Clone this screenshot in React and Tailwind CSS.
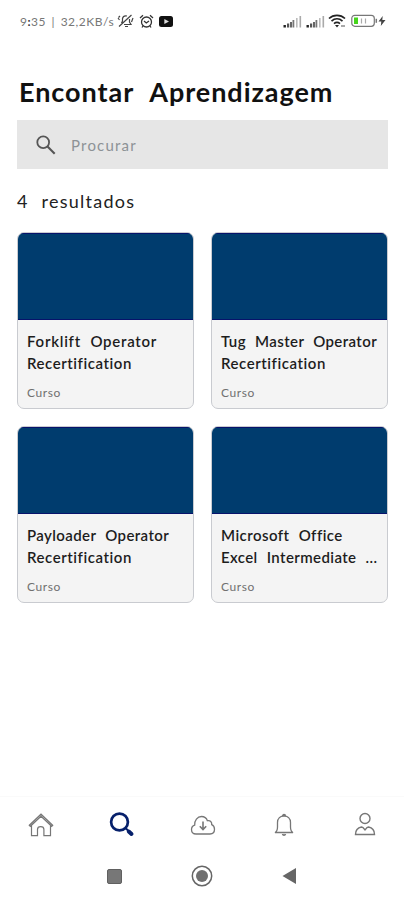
import * as React from "react"
import { cva } from "class-variance-authority"
import clsx from "clsx"

const courses = [
  {
    id: 1,
    type: "Curso",
    lines: [
      { text: "Forklift Operator", spacing: "tracking-[0.75px]" },
      { text: "Recertification", spacing: "tracking-[0.55px]" },
    ],
  },
  {
    id: 2,
    type: "Curso",
    lines: [
      { text: "Tug Master Operator", spacing: "tracking-[0.4px]" },
      { text: "Recertification", spacing: "tracking-[0.55px]" },
    ],
  },
  {
    id: 3,
    type: "Curso",
    lines: [
      { text: "Payloader Operator", spacing: "tracking-[0.4px]" },
      { text: "Recertification", spacing: "tracking-[0.55px]" },
    ],
  },
  {
    id: 4,
    type: "Curso",
    lines: [
      { text: "Microsoft Office", spacing: "tracking-[0.45px]" },
      { text: "Excel Intermediate ...", spacing: "tracking-[0.4px]" },
    ],
  },
]

const iconVariants = cva("shrink-0 fill-none", {
  variants: {
    tone: {
      default: "stroke-[#777]",
      active: "stroke-[#06206b]",
    },
  },
  defaultVariants: { tone: "default" },
})

// Status bar
const SignalIcon = () => (
  <svg width="19" height="13" viewBox="0 0 19 13" className="shrink-0">
    <rect x="0.5" y="10" width="2.4" height="2.5" fill="#222" />
    <rect x="4" y="8.5" width="2.2" height="4" fill="#555" />
    <rect x="7" y="7" width="2" height="5.5" fill="#666" />
    <rect x="9.5" y="5" width="1.8" height="7.5" fill="#777" />
    <rect x="13" y="3" width="1.6" height="9.5" fill="#bbb" />
    <rect x="16.5" y="1" width="1.6" height="11.5" fill="#aaa" />
  </svg>
)

const StatusBar = () => (
  <div className="flex h-[42px] items-center pl-5 pr-[18px]">
    <span className="w-[97px] whitespace-pre pt-px text-[12px] leading-none tracking-[0.5px] text-[#777] [word-spacing:2px]">
      <span>9</span>
      <span className="font-bold text-[#333]">:</span>
      <span>35 | 32,2KB/s</span>
    </span>
    <svg width="17" height="16" viewBox="0 0 17 16" fill="none" stroke="#444" strokeWidth="1.2" className="shrink-0">
      <path d="M2 13.500 14.500 2M4.500 10l1-2V5.500C6 3.500 8 2.500 10 3M12.500 6v3l1.500 2.500H7M8 13.500h3M1 5l1.500 2M16 5l-1.500 4M3 3 1.500 4.500" />
    </svg>
    <svg width="15" height="15" viewBox="0 0 15 15" fill="none" stroke="#333" strokeWidth="1.3" className="ml-[5px] shrink-0">
      <circle cx="7.5" cy="8" r="5" />
      <path d="M1 4 4 1.3M14 4l-3-2.7M5 7l2.3 2L10 7M4 12l-1 1.500M11 12l1 1.500" />
    </svg>
    <svg width="14" height="11" viewBox="0 0 14 11" className="ml-[5px] shrink-0">
      <rect width="14" height="11" rx="2.5" fill="#111" />
      <path d="M5.3 3 10 5.5 5.3 8Z" fill="#ddd" />
    </svg>
    <div className="ml-auto flex items-center">
      <SignalIcon />
      <div className="w-[4px]" />
      <SignalIcon />
      <svg width="18" height="14" viewBox="0 0 18 14" fill="none" stroke="#222" strokeWidth="1.7" className="ml-[3px] shrink-0">
        <path d="M1 4.500C5.500.3 12.500.3 17 4.500M3.500 7.200c3.300-3 7.700-3 11 0M6 9.700c1.800-1.500 4.200-1.500 6 0" />
        <path d="m7 11 2 2.500 2-2.500Z" fill="#222" stroke="none" />
        <path d="M13 12h4" stroke="#999" />
      </svg>
      <svg width="27" height="14" viewBox="0 0 27 14" fill="none" className="ml-[5px] shrink-0">
        <rect x="0.8" y="1.3" width="22.5" height="11" rx="3" stroke="#777" strokeWidth="1.2" />
        <rect x="3" y="3.5" width="4" height="6.5" fill="#45d41b" />
        <path d="M25.3 4.8v4" stroke="#777" strokeWidth="1.5" />
        <path d="M10.500 4.500v5M14.500 4.500v5" stroke="#aaa" strokeWidth="1.2" />
      </svg>
      <svg width="8" height="10" viewBox="0 0 8 10" className="shrink-0">
        <path d="M4.700 0 .5 5.600h2.800L2.800 10 7.500 4H4.300Z" fill="#444" />
      </svg>
    </div>
  </div>
)

const SearchField = () => (
  <label className="flex h-[49px] items-center bg-[#e6e6e6] pl-[19px]">
    <svg width="20" height="20" viewBox="0 0 20 20" fill="none" stroke="#555" strokeWidth="1.8" className="shrink-0">
      <circle cx="7.2" cy="7.2" r="5.9" />
      <path d="m11.500 11.500 7.200 7.200" strokeWidth="2.1" />
    </svg>
    <span className="ml-[15px] pt-px text-[15px] tracking-[1.2px] text-[#8d9296]">Procurar</span>
  </label>
)

const CourseCard = ({ course, className }) => (
  <article
    className={clsx(
      "flex h-[177px] flex-col overflow-hidden rounded-[7px] border border-[#c9cbd0] bg-[#f4f4f4]",
      className
    )}
  >
    <div className="h-[87px] shrink-0 border-y border-[#07136b] bg-[#003c6e]" />
    <div className="flex flex-col pl-[9px] pt-[10px]">
      <h2 className="whitespace-nowrap text-[15px] font-semibold leading-[22px] text-[#1d1d1d] [word-spacing:5px]">
        {course.lines.map((line) => (
          <span key={line.text} className={clsx("block", line.spacing)}>{line.text}</span>
        ))}
      </h2>
      <p className="mt-[10px] text-[12px] leading-[18px] tracking-[0.6px] text-[#707070]">{course.type}</p>
    </div>
  </article>
)

// Bottom tab bar
const HomeIcon = () => (
  <svg width="26" height="26" viewBox="0 0 26 26" className={iconVariants()} strokeWidth="1.2">
    <path d="M1.300 13.300 13 2.200l11.700 11.100-1 1L13 4.300l-10.700 10ZM3.500 13.200v10.500h6v-6.200c0-3.800 6.400-3.800 6.400 0v6.200h6.600V13.200" />
  </svg>
)

const SearchIcon = () => (
  <svg width="26" height="26" viewBox="0 0 26 26" className={iconVariants({ tone: "active" })}>
    <circle cx="10.5" cy="10" r="8.4" strokeWidth="2.7" />
    <path d="m16.500 16 3 3" strokeWidth="2" />
    <path d="m19.800 19.500 2.700 2.500" strokeWidth="4" strokeLinecap="round" />
  </svg>
)

const CloudIcon = () => (
  <svg width="26" height="26" viewBox="0 0 26 26" className={iconVariants()} strokeWidth="1.3">
    <path d="M6 22C3 22 1.500 20 1.500 17.500c0-2.200 1.300-3.800 3.200-4.400C4.300 8.500 7.400 4.500 11.500 4.500c3 0 5 1.600 5.900 4.200 2.800-.7 4.700 1.300 4.300 3.900 1.700.7 2.800 2.500 2.800 4.700 0 2.700-1.700 4.700-4.500 4.700Z" />
    <path d="M13 9.500v8M9.800 14.300 13 17.500l3.200-3.200" strokeWidth="1.6" />
  </svg>
)

const BellIcon = () => (
  <svg width="26" height="26" viewBox="0 0 26 26" className={iconVariants()} strokeWidth="1.3">
    <path d="M11.500 4c0-2 3-2 3 0M4 20.500c2-1 2.500-3 2.500-5.500v-4.500C6.500 6.500 9.300 4 13 4s6.500 2.500 6.500 6.500V15c0 2.500.5 4.500 2.500 5.500Z" />
    <path d="M11.500 22c.5 1.500 2.500 1.500 3 0" strokeWidth="1.6" />
  </svg>
)

const UserIcon = () => (
  <svg width="26" height="26" viewBox="0 0 26 26" className={iconVariants()} strokeWidth="1.4">
    <circle cx="13" cy="6.5" r="5" />
    <path d="M3.500 22.500c0-4.500 2.300-6.800 6-7.500l1.500.5 2 2.500 2-2.500 1.500-.5c3.700.7 6 3 6 7.500Z" />
  </svg>
)

const TabBar = () => (
  <nav className="flex h-[56px] items-center justify-between border-t border-[#fafafa] pl-7 pr-[26px]">
    <HomeIcon />
    <SearchIcon />
    <CloudIcon />
    <BellIcon />
    <UserIcon />
  </nav>
)

const SystemNav = () => (
  <div className="flex h-[48px] items-center pl-[107px]">
    <div className="size-[15px] rounded-[2px] border border-[#606060] bg-[#777]" />
    <svg width="22" height="22" viewBox="0 0 22 22" className="ml-[69px]">
      <circle cx="11" cy="11" r="9.7" fill="none" stroke="#666" strokeWidth="1.5" />
      <circle cx="11" cy="11" r="6" fill="#707070" />
    </svg>
    <svg width="15" height="18" viewBox="0 0 15 18" className="ml-[69px]">
      <path d="M14 1v16L.5 9Z" fill="#666" />
    </svg>
  </div>
)

export default function App() {
  return (
    <div className="flex h-[900px] w-[404px] flex-col overflow-hidden bg-white font-['Lato',sans-serif]">
      <StatusBar />
      <main className="flex flex-1 flex-col pl-[17px] pr-4 pt-[30px]">
        <h1 className="h-[48px] whitespace-nowrap pl-[2px] text-[27px] font-bold leading-[40px] tracking-[0.95px] text-[#111] [word-spacing:9px]">
          Encontar Aprendizagem
        </h1>
        <SearchField />
        <p className="mt-[18px] h-[28px] text-[18px] leading-[28px] tracking-[1.25px] text-[#222] [word-spacing:7px]">
          4 resultados
        </p>
        <div className="mt-[17px] grid grid-cols-2 gap-[17px]">
          {courses.map((course) => (
            <CourseCard key={course.id} course={course} />
          ))}
        </div>
      </main>
      <TabBar />
      <SystemNav />
    </div>
  )
}
